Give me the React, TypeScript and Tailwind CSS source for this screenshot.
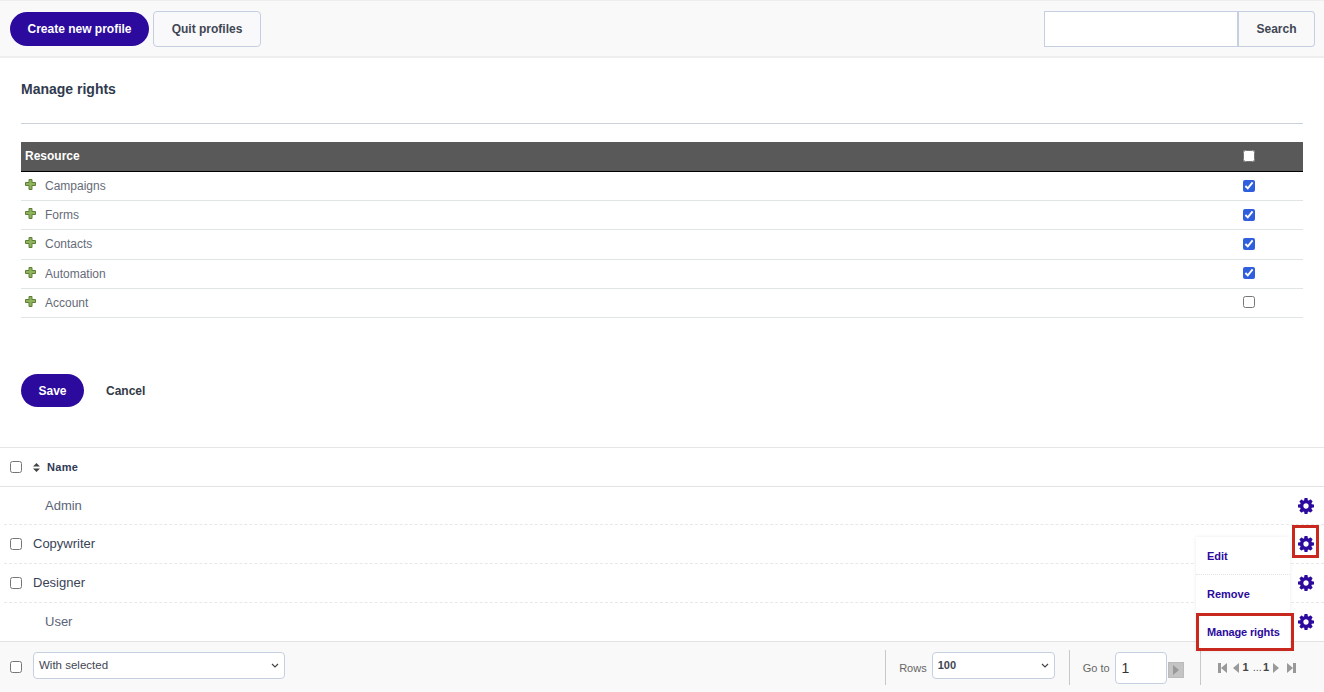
import React from 'react';

const resources = [
    { name: 'Campaigns', checked: true },
    { name: 'Forms', checked: true },
    { name: 'Contacts', checked: true },
    { name: 'Automation', checked: true },
    { name: 'Account', checked: false },
];

const profiles = [
    { name: 'Admin', selectable: false },
    { name: 'Copywriter', selectable: true },
    { name: 'Designer', selectable: true },
    { name: 'User', selectable: false },
];

const CogIcon = () => (
    <svg width="16" height="16" viewBox="128 128 1536 1536" className="shrink-0" fill="#2c0a9e">
        <path d="M1152 896q0-106-75-181t-181-75-181 75-75 181 75 181 181 75 181-75 75-181zm512-109v222q0 12-8 23t-20 13l-185 28q-19 54-39 91 35 50 107 138 10 12 10 25t-9 23q-27 37-99 108t-94 71q-12 0-26-9l-138-108q-44 23-91 38-16 136-29 186-7 28-36 28h-222q-14 0-24.5-8.5t-11.5-21.5l-28-184q-49-16-90-37l-141 107q-10 9-25 9-14 0-25-11-126-114-165-168-7-10-7-23 0-12 8-23 15-21 51-66.5t54-70.5q-27-50-41-99l-183-27q-13-2-21-12.5t-8-23.5v-222q0-12 8-23t19-13l186-28q14-46 39-92-40-57-107-138-10-12-10-24 0-10 9-23 26-36 98.5-107.5t94.5-71.5q13 0 26 10l138 107q44-23 91-38 16-136 29-186 7-28 36-28h222q14 0 24.5 8.5t11.5 21.5l28 184q49 16 90 37l142-107q9-9 24-9 13 0 25 10 129 119 165 170 7 8 7 22 0 12-8 23-15 21-51 66.5t-54 70.5q26 50 41 98l183 28q13 2 21 12.5t8 23.5z" />
    </svg>
);

const PlusIcon = () => (
    <svg width="11" height="11" viewBox="0 0 11 11" className="shrink-0">
        <path d="M4 .5h3v3h3.5v3H7v4H4v-4H.5v-3H4z" fill="#8fb35c" stroke="#5d7f35" strokeWidth="1" />
    </svg>
);

const Chevron = () => (
    <svg width="8" height="5" viewBox="0 0 8 5" className="shrink-0">
        <path d="M1 1l3 3 3-3" fill="none" stroke="#444" strokeWidth="1.2" />
    </svg>
);

const First = () => (
    <svg width="9" height="10" viewBox="0 0 9 10"><path d="M0 0h3v10H0zM9 0v10L3 5z" fill="#999" /></svg>
);
const Prev = () => (
    <svg width="6" height="10" viewBox="0 0 6 10"><path d="M6 0v10L0 5z" fill="#999" /></svg>
);
const Next = () => (
    <svg width="6" height="10" viewBox="0 0 6 10"><path d="M0 0v10l6-5z" fill="#999" /></svg>
);
const Last = () => (
    <svg width="9" height="10" viewBox="0 0 9 10"><path d="M9 0H6v10h3zM0 0v10l6-5z" fill="#999" /></svg>
);

const App = () => {
    return (
        <div className="h-[692px] w-full overflow-hidden bg-white font-['Liberation_Sans',Arial,sans-serif] flex flex-col">
            <header className="h-[58px] shrink-0 bg-[#f9f9f9] border-t border-t-[#eeeeee] border-b-2 border-b-[#eeeeee] pl-[10px] pr-[9px] pt-[10px] flex justify-between items-start">
                <div className="flex items-center gap-1">
                    <button className="h-[34px] w-[139px] rounded-full bg-[#2c0a9e] text-white text-xs font-bold">Create new profile</button>
                    <button className="h-9 w-[108px] rounded border border-[#c5cfe0] bg-[#f9f9fb] text-[#3f4654] text-xs font-bold">Quit profiles</button>
                </div>
                <div className="flex">
                    <input className="h-9 w-[193px] bg-white border border-[#c5cfe0] border-r-0" />
                    <button className="h-9 w-[78px] rounded-r border border-[#c5cfe0] border-l-2 bg-[#f9f9f9] text-[#3f4654] text-xs font-bold">Search</button>
                </div>
            </header>

            <section className="h-[389px] shrink-0 px-[21px] pt-[23px]">
                <h2 className="text-sm leading-4 font-bold text-[#2f3a4f]">Manage rights</h2>
                <div className="mt-[26px] border-t border-[#c9d1da]" />
                <div className="mt-[18px] h-[30px] bg-[#595959] border-b border-black flex items-center justify-between pl-1 pr-[48px] pb-[2px]">
                    <span className="text-xs font-bold text-white">Resource</span>
                    <input type="checkbox" readOnly className="m-0 w-3 h-3 accent-[#2f5fdc]" />
                </div>
                {resources.map((resource) => (
                    <div key={resource.name} className="h-[29.2px] border-b border-[#dfe5e5] flex items-center justify-between pl-1 pr-[48px]">
                        <div className="flex items-center">
                            <span className="-mt-[3px] flex"><PlusIcon /></span>
                            <span className="ml-[9px] text-xs text-[#666b78]">{resource.name}</span>
                        </div>
                        <input type="checkbox" defaultChecked={resource.checked} className="m-0 -mt-[1px] w-3 h-3 accent-[#2f5fdc]" />
                    </div>
                ))}
                <div className="mt-[56.25px] flex items-center">
                    <button className="h-[33px] w-[63px] rounded-full bg-[#2c0a9e] text-white text-xs font-bold">Save</button>
                    <button className="ml-[22px] text-xs font-bold text-[#333a45]">Cancel</button>
                </div>
            </section>

            <section className="flex-1 flex flex-col border-t border-[#e5e5e5] relative">
                <div className="h-[39px] shrink-0 border-b border-[#e3e3e3] flex items-center pl-[10px]">
                    <input type="checkbox" className="m-0 w-3 h-3" />
                    <svg width="7" height="9" viewBox="0 0 7 9" className="ml-[11px]">
                        <path d="M3.5 0L7 3.6H0zM3.5 9L0 5.4h7z" fill="#444" />
                    </svg>
                    <span className="ml-[7px] text-[11px] font-bold text-[#2f3a55] tracking-[0.3px]">Name</span>
                </div>
                {profiles.map((profile, index) => (
                    <div
                        key={profile.name}
                        className={`shrink-0 ml-1 flex items-center justify-between pl-[6px] pr-[10px] ${index === 0 || index === 3 ? 'h-[38px]' : 'h-[39px]'} ${index < 3 ? 'border-b border-dashed border-[#e8e8e8]' : ''}`}
                    >
                        <div className="flex items-center">
                            {profile.selectable ? (
                                <>
                                    <input type="checkbox" className="m-0 w-3 h-3" />
                                    <span className="ml-[11px] text-[13px] text-[#3a4256]">{profile.name}</span>
                                </>
                            ) : (
                                <span className="ml-[35px] text-[13px] text-[#5a6478]">{profile.name}</span>
                            )}
                        </div>
                        <CogIcon />
                    </div>
                ))}

                <div className="absolute left-[1196px] top-[89px] w-[94px] bg-white shadow-[0_0_4px_rgba(0,0,0,0.08)] z-10">
                    <div className="h-[38px] pl-[11px] pt-[1px] flex items-center text-[11px] font-bold text-[#2c0a9e] border-b border-dotted border-[#e3e3e3]">Edit</div>
                    <div className="h-[38px] pl-[11px] flex items-center text-[11px] font-bold text-[#2c0a9e]">Remove</div>
                    <div className="h-[38px] pl-[11px] flex items-center text-[11px] font-bold text-[#2c0a9e] whitespace-nowrap tracking-[-0.15px]">Manage rights</div>
                </div>
                <div className="absolute left-[1196px] top-[165px] w-[98px] h-[38px] border-[3px] border-[#c8281e] z-20" />
                <div className="absolute left-[1292px] top-[77px] w-[27px] h-[33px] border-[3px] border-[#c8281e] z-20" />

                <footer className="mt-auto h-[51px] shrink-0 bg-[#f9f9f9] border-t border-[#e3e3e3] flex items-center pl-[10px]">
                    <input type="checkbox" className="m-0 w-3 h-3" />
                    <div className="ml-[11px] self-start mt-[10px] h-[27px] w-[252px] rounded border border-[#c5cfe0] bg-white flex items-center justify-between pl-[5px] pr-[5px]">
                        <span className="text-[11.5px] text-[#3f4654]">With selected</span>
                        <Chevron />
                    </div>
                    <div className="ml-auto self-start mt-[8px] flex h-[35px]">
                        <div className="h-full border-l border-[#c8c8c8] pl-[13px] flex items-start">
                            <span className="mt-[10px] text-[11px] text-[#666]">Rows</span>
                            <div className="ml-[5px] mt-[2px] h-[27px] w-[123px] rounded border border-[#c5cfe0] bg-white flex items-center justify-between pl-[5px] pr-[5px]">
                                <span className="text-[11px] font-bold text-[#3f4654]">100</span>
                                <Chevron />
                            </div>
                        </div>
                        <div className="ml-[14px] h-full border-l border-[#c8c8c8] pl-[13px] flex items-start">
                            <span className="mt-[10px] text-[11px] text-[#666]">Go to</span>
                            <div className="ml-[5px] mt-[2px] h-8 w-[52px] rounded border border-[#c5cfe0] bg-white flex items-center pl-[6px] text-sm text-[#333]">1</div>
                            <div className="ml-[1px] mt-[12px] w-[16px] h-[16px] bg-[#c4c4c4] border border-[#bbb] flex items-center justify-center">
                                <svg width="6" height="10" viewBox="0 0 6 10"><path d="M0 0v10l6-5z" fill="#999" /></svg>
                            </div>
                        </div>
                        <div className="ml-[16px] h-full border-l border-[#c8c8c8] pl-[17px] pr-[28px] flex items-center gap-[4px] text-[11px] text-[#555]">
                            <First />
                            <span className="ml-[2px] flex"><Prev /></span>
                            <span className="font-bold text-[#444]">1</span>
                            <span>...</span>
                            <span className="-ml-[3px] font-bold text-[#444]">1</span>
                            <Next />
                            <span className="ml-[4px] flex"><Last /></span>
                        </div>
                    </div>
                </footer>
            </section>
        </div>
    );
};

export default App;
